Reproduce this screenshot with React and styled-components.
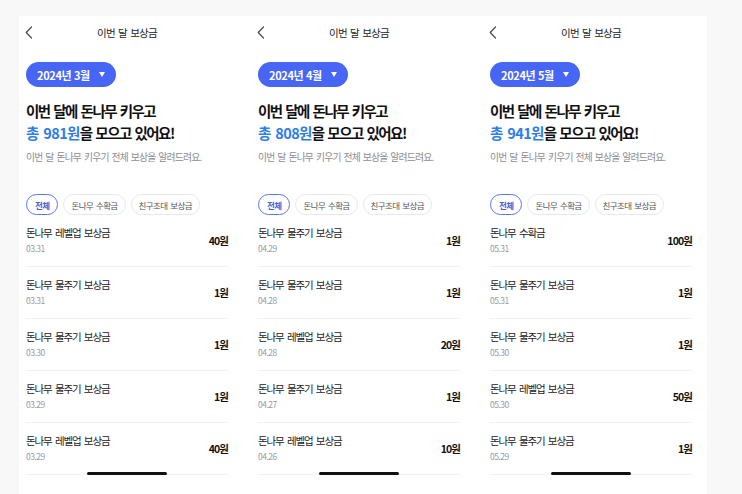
import React from "react";
import styled, { createGlobalStyle } from "styled-components";

const GlobalStyle = createGlobalStyle`
  html, body { margin: 0; padding: 0; }
  body {
    background: #f8f8f9;
    font-family: "Noto Sans CJK KR", "Noto Sans", sans-serif;
    -webkit-font-smoothing: antialiased;
  }
`;

const Page = styled.div`
  padding: 16px 0 0 19px;
  height: 494px;
  box-sizing: border-box;
  overflow: hidden;
`;

const Sheet = styled.div`
  width: 688px;
  height: 478px;
  background: #ffffff;
  display: flex;
  gap: 30px;
  padding: 0 15px 0 7px;
  box-sizing: border-box;
  overflow: hidden;
`;

const Panel = styled.section`
  position: relative;
  width: 202px;
  flex: none;
  display: flex;
  flex-direction: column;
`;

const Header = styled.header`
  height: 32px;
  display: grid;
  grid-template-columns: 24px 1fr 24px;
  align-items: center;
`;

const Back = styled.svg`
  width: 8px;
  height: 13px;
  margin-left: -1px;
`;

const Title = styled.h1`
  margin: 0;
  text-align: center;
  font-size: 10.5px;
  font-weight: 400;
  letter-spacing: -0.7px;
  word-spacing: 1.5px;
  color: #222;
`;

const MonthPill = styled.button`
  align-self: flex-start;
  margin-top: 14px;
  height: 25px;
  padding: 0 11px;
  border: none;
  border-radius: 13px;
  background: #4766f5;
  color: #fff;
  display: flex;
  align-items: center;
  gap: 9px;
  font-family: inherit;
  font-size: 11px;
  font-weight: 700;
  letter-spacing: -0.35px;
  word-spacing: 0.5px;
`;

const Caret = styled.span`
  width: 0;
  height: 0;
  border-left: 3px solid transparent;
  border-right: 3px solid transparent;
  border-top: 5px solid #fff;
`;

const Headline = styled.h2`
  margin: 13px 0 0;
  font-size: 14.5px;
  line-height: 21.5px;
  font-weight: 700;
  letter-spacing: -1.5px;
  word-spacing: 1.8px;
  color: #111;
`;

const Accent = styled.span`
  color: #2d7de8;
  letter-spacing: -0.6px;
`;

const Sub = styled.p`
  margin: 7px 0 0;
  font-size: 9.8px;
  line-height: 14px;
  letter-spacing: -0.8px;
  word-spacing: 1.5px;
  color: #8c8c92;
`;

const Chips = styled.div`
  margin-top: 30px;
  display: flex;
  gap: 5px;
`;

const Chip = styled.span`
  height: 21px;
  box-sizing: border-box;
  padding: 0 ${(p) => (p.$active ? 8 : 7)}px;
  border-radius: 11px;
  border: 1px solid ${(p) => (p.$active ? "#5b79e6" : "#e8e8ec")};
  display: flex;
  align-items: center;
  font-size: 8.5px;
  font-weight: ${(p) => (p.$active ? 700 : 400)};
  letter-spacing: -0.6px;
  word-spacing: 1.5px;
  color: ${(p) => (p.$active ? "#3f5fd8" : "#555")};
`;

const List = styled.ul`
  margin: 0;
  padding: 0;
  list-style: none;
`;

const Row = styled.li`
  height: 52px;
  box-sizing: border-box;
  border-bottom: 1px solid #f1f1f3;
  display: flex;
  align-items: center;
  justify-content: space-between;
`;

const RowText = styled.div`
  display: flex;
  flex-direction: column;
  align-self: flex-start;
  padding-top: 11px;
`;

const RowTitle = styled.span`
  font-size: 10.5px;
  line-height: 14px;
  letter-spacing: -1.1px;
  word-spacing: 2px;
  color: #222;
`;

const RowDate = styled.span`
  margin-top: 2px;
  font-size: 8.5px;
  line-height: 13px;
  letter-spacing: -0.5px;
  color: #9a9aa0;
`;

const Amount = styled.span`
  font-size: 10.5px;
  font-weight: 700;
  letter-spacing: -0.9px;
  color: #111;
`;

const HomeBar = styled.div`
  position: absolute;
  left: 50%;
  bottom: 19px;
  width: 80px;
  height: 3px;
  margin-left: -40px;
  border-radius: 2px;
  background: #111;
`;

const panels = [
  {
    month: "2024년 3월",
    total: "981",
    rows: [
      ["돈나무 레벨업 보상금", "03.31", "40원"],
      ["돈나무 물주기 보상금", "03.31", "1원"],
      ["돈나무 물주기 보상금", "03.30", "1원"],
      ["돈나무 물주기 보상금", "03.29", "1원"],
      ["돈나무 레벨업 보상금", "03.29", "40원"],
    ],
  },
  {
    month: "2024년 4월",
    total: "808",
    rows: [
      ["돈나무 물주기 보상금", "04.29", "1원"],
      ["돈나무 물주기 보상금", "04.28", "1원"],
      ["돈나무 레벨업 보상금", "04.28", "20원"],
      ["돈나무 물주기 보상금", "04.27", "1원"],
      ["돈나무 레벨업 보상금", "04.26", "10원"],
    ],
  },
  {
    month: "2024년 5월",
    total: "941",
    rows: [
      ["돈나무 수확금", "05.31", "100원"],
      ["돈나무 물주기 보상금", "05.31", "1원"],
      ["돈나무 물주기 보상금", "05.30", "1원"],
      ["돈나무 레벨업 보상금", "05.30", "50원"],
      ["돈나무 물주기 보상금", "05.29", "1원"],
    ],
  },
];

function Screen({ data }) {
  return (
    <Panel>
      <Header>
        <Back viewBox="0 0 8 13" fill="none">
          <path d="M6.5 1 L1.2 6.5 L6.5 12" stroke="#4a4a50" strokeWidth="1.2" strokeLinecap="round" strokeLinejoin="round" />
        </Back>
        <Title>이번 달 보상금</Title>
        <span />
      </Header>
      <MonthPill>
        {data.month}
        <Caret />
      </MonthPill>
      <Headline>
        이번 달에 돈나무 키우고
        <br />
        <Accent>총 {data.total}원</Accent>을 모으고 있어요!
      </Headline>
      <Sub>이번 달 돈나무 키우기 전체 보상을 알려드려요.</Sub>
      <Chips>
        <Chip $active>전체</Chip>
        <Chip>돈나무 수확금</Chip>
        <Chip>친구초대 보상금</Chip>
      </Chips>
      <List>
        {data.rows.map(([t, d, a], i) => (
          <Row key={i}>
            <RowText>
              <RowTitle>{t}</RowTitle>
              <RowDate>{d}</RowDate>
            </RowText>
            <Amount>{a}</Amount>
          </Row>
        ))}
      </List>
      <HomeBar />
    </Panel>
  );
}

export default function App() {
  return (
    <>
      <GlobalStyle />
      <Page>
        <Sheet>
          {panels.map((p) => (
            <Screen key={p.month} data={p} />
          ))}
        </Sheet>
      </Page>
    </>
  );
}
